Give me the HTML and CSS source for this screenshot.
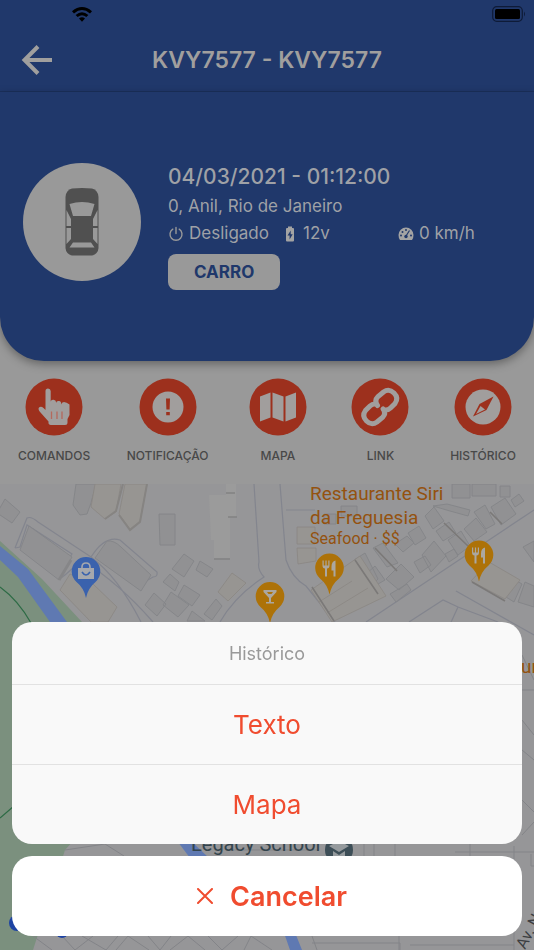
FILE: index.html
```html
<!DOCTYPE html>
<html lang="pt-BR">
<head>
    <meta charset="UTF-8">
    <meta name="viewport" content="width=device-width, initial-scale=1.0">
    <title>KVY7577</title>
    <link rel="stylesheet" href="styles.css">
</head>
<body>
    <div class="screen">
        <header class="topbar">
            <div class="status">
                <svg class="wifi" viewBox="0 0 22 16" width="22" height="16">
                    <path d="M1 5.2Q11-3.2 21 5.2L19 7.4Q11 .8 3 7.4ZM4.6 9Q11 3.6 17.4 9L15.3 11.1Q11 7.6 6.7 11.1ZM8 12.5Q11 10 14 12.5L11 15.7Z" fill="#000"/>
                </svg>
                <svg class="battery" viewBox="0 0 34 16" width="34" height="16">
                    <rect x=".7" y=".7" width="29.6" height="14.6" rx="4" fill="none" stroke="#0e1b38" stroke-width="1.2"/>
                    <rect x="3" y="3" width="25" height="10" rx="1.5" fill="#000"/>
                    <path d="M32 5.5v5q2-2.500 0-5Z" fill="#0e1b38"/>
                </svg>
            </div>
            <nav class="nav">
                <button class="back" aria-label="Voltar">
                    <svg viewBox="0 0 32 32" width="32" height="32" fill="none" stroke="#a09f9e" stroke-width="4">
                        <path d="M31 16H4M17 2.500L3.500 16 17 29.500"/>
                    </svg>
                </button>
                <h1 class="title">KVY7577 - KVY7577</h1>
            </nav>
        </header>

        <section class="vehicle">
            <div class="avatar">
                <svg viewBox="0 0 34 68" width="34" height="68">
                    <path d="M7 .5Q17-.5 27 .5Q33 2 33.500 9V60Q33 66 27 67.500H7Q1 66 .5 60V9Q1 2 7 .5Z" fill="#505050"/>
                    <path d="M4.500 16Q17 12 29.500 16L26 28H8ZM8 54.500H26L29.500 59.500H4.500ZM1.500 22L6 31V38H1.500ZM32.500 22L28 31V38H32.500ZM1.500 40H6V51L1.500 56ZM32.500 40H28V51L32.500 56Z" fill="#999"/>
                </svg>
            </div>
            <div class="info">
                <h2 class="date">04/03/2021 - 01:12:00</h2>
                <p class="address">0, Anil, Rio de Janeiro</p>
                <div class="stats">
                    <span class="stat stat-power">
                        <svg viewBox="0 0 16 16" width="16" height="16" fill="none" stroke="#999" stroke-width="1.400" stroke-linecap="round">
                            <path d="M8 1.500v6M4.800 3.200A6 6 0 1 0 11.200 3.200"/>
                        </svg>
                        Desligado
                    </span>
                    <span class="stat stat-volt">
                        <svg viewBox="0 0 10 16" width="10" height="16">
                            <path d="M3 0.500H7V2H8Q9 2 9 3V14.500Q9 15.500 8 15.500H2Q1 15.500 1 14.500V3Q1 2 2 2H3Z" fill="#a3a3a3"/>
                            <path d="M5.700 4.500L2.500 9.500H4.600V13.500L7.700 8.300H5.700Z" fill="#20386b"/>
                        </svg>
                        12v
                    </span>
                    <span class="stat">
                        <svg viewBox="0 0 16 16" width="16" height="16">
                            <path d="M8 1.500A7.500 7.500 0 0 0 .5 9Q.5 12 2 14H14Q15.500 12 15.500 9A7.500 7.500 0 0 0 8 1.500Z" fill="#a3a3a3"/>
                            <path d="M11.500 4.500L8 10" stroke="#20386b" stroke-width="1.200"/>
                            <g fill="#20386b"><circle cx="8" cy="10.500" r="1.700"/><circle cx="3" cy="9.500" r="1"/><circle cx="4.500" cy="6" r="1"/><circle cx="8" cy="4" r="1"/><circle cx="13" cy="9.500" r="1"/></g>
                        </svg>
                        0 km/h
                    </span>
                </div>
                <span class="tag">CARRO</span>
            </div>
        </section>

        <nav class="actions">
            <button class="action">
                <svg viewBox="0 0 58 58" width="58" height="58">
                    <circle cx="29" cy="29" r="28.500" fill="#9d301d"/>
                    <path d="M20.500 13Q20.500 10.500 23 10.500T25.700 13V23.500Q26 21.500 28.500 21.800T31 24V25Q31.500 22.500 34 23T36 25.500V26.500Q36.500 24 39 24T44.500 26.500V37L42.500 41V44.500Q42.500 47 40 47H26Q24.500 47 23.500 45.500V43.500L15.500 34.500Q12.500 31 14 29.500Q16 28 18.500 30L20.500 32Z" fill="#a19e9d"/>
                    <path d="M26.500 33.500V41M32 33.500V41M37 33.500V41" stroke="#b5695c" stroke-width="1.300"/>
                </svg>
                COMANDOS
            </button>
            <button class="action">
                <svg viewBox="0 0 58 58" width="58" height="58">
                    <circle cx="29" cy="29" r="28.500" fill="#9d301d"/>
                    <circle cx="29" cy="29" r="15.500" fill="#a19e9d"/>
                    <path d="M27 20.500H31L30.600 31.500H27.400ZM27.200 34H30.800V37.200H27.200Z" fill="#9d301d"/>
                </svg>
                NOTIFICAÇÃO
            </button>
            <button class="action">
                <svg viewBox="0 0 58 58" width="58" height="58">
                    <circle cx="29" cy="29" r="28.500" fill="#9d301d"/>
                    <path d="M11 18.500L21.500 14.500V39.500L11 43.500ZM23.500 14.500L34.500 18.500V43.500L23.500 39.500ZM36.500 18.500L47 14.500V39.500L36.500 43.500Z" fill="#a19e9d"/>
                </svg>
                MAPA
            </button>
            <button class="action">
                <svg viewBox="0 0 58 58" width="58" height="58">
                    <circle cx="29" cy="29" r="28.500" fill="#9d301d"/>
                    <g fill="none" stroke="#a19e9d" stroke-width="5" stroke-linecap="round">
                        <path d="M32 31Q35.500 35.500 31.500 39.500L26 44Q20.500 48 15.500 43Q10.500 38 14.500 32.500L19 28Q21.500 25.500 25 26"/>
                        <path d="M26.500 27.500Q23 22.500 27 18.500L32.500 14Q38 10 43 15Q48 20 44 25.500L39.500 30Q37 32.500 33.500 32"/>
                    </g>
                </svg>
                LINK
            </button>
            <button class="action">
                <svg viewBox="0 0 58 58" width="58" height="58">
                    <circle cx="29" cy="29" r="28.500" fill="#9d301d"/>
                    <circle cx="29" cy="29" r="17.500" fill="#a19e9d"/>
                    <path d="M39.500 18.500L32.500 32 19 38.500 25.500 26Z" fill="#9d301d"/>
                    <path d="M26.500 28L31 31.500 22 36Z" fill="#a19e9d"/>
                </svg>
                HISTÓRICO
            </button>
        </nav>

        <div class="map">
            <svg class="map-canvas" viewBox="0 484 534 466" preserveAspectRatio="xMidYMin slice">
                <rect y="484" width="534" height="466" fill="#969698"/>
                <!-- park and river -->
                <path d="M0 541L42 579 82 622 110 800 65 850 33 950H0Z" fill="#7b907e"/>
                <path d="M0 546L28 569 67 622H50L18 577 0 560Z" fill="#5f79b2"/>
                <path d="M178 842H192L209 858H190ZM283 930H294L302 950H290Z" fill="#5f79b2"/>
                <path d="M0 587Q18 600 31 623M0 818L14 806" fill="none" stroke="#2d6b45" stroke-width="1.200"/>
                <!-- roads -->
                <g fill="none" stroke="#83858e" stroke-width="1.200">
                    <path d="M15 548L27 518Q31 516 38 522L91 557Q105 535 120 540L157 572Q158 577 153 577L146 581M15 548L20 547 27 525L72 554 59 574Q58 581 65 575L82 560Q120 584 153 622M91 557Q118 577 141 622"/>
                    <path d="M254 484L259 562Q257 569 264 577Q235 596 220 622M280 484L286 560Q292 578 306 586L335 622M286 510H315M366 622L534 510M456 591L534 635M409 622L443 600 458 607 447 631M458 607L498 622"/>
                </g>
                <!-- buildings -->
                <g fill="#919193" stroke="#838488" stroke-width=".9">
                    <path d="M5 499L20 512 12 523-3 513ZM29 526L72 557 59 580 20 550ZM76 484L73 505 80 515 87 514 91 503 96 484ZM159 514H175V545H160ZM107 541Q114 540 121 547L151 575 141 591 95 558ZM184 554L194 561 184 577 172 569ZM200 561L213 569 207 577 196 570ZM170 574L179 582 175 591 163 582ZM184 585L200 595 192 606 178 596ZM171 592L189 605 178 617 163 605ZM154 593L166 604 157 616 145 605ZM216 599L222 606 212 620 204 614ZM192 611L205 621H187Z"/>
                    <path d="M425 516L434 507 444 521 433 529ZM448 540L461 531 470 546 458 555ZM464 529L476 518 487 532 474 541ZM474 512L485 505 495 524 486 529ZM491 507L505 498 516 514 501 525ZM511 500L519 494 524 501 515 507ZM500 486H510V497H500ZM422 555L434 541 446 556 431 572ZM445 554L454 549 458 556 449 562ZM414 562L425 556 431 565 420 573ZM386 579L401 564 414 577 399 590ZM365 575L375 566 385 580 373 587ZM373 548L383 543 398 563 387 567ZM354 560L365 553 378 579 367 590ZM390 594L407 584 411 590 396 602ZM452 484H470V498H452ZM472 484H496V496H472ZM395 544L407 536 414 543 403 552ZM408 533L419 526 426 538 415 545ZM341 506H357V516H341ZM324 514H336V524H324Z"/>
                    <path d="M515 580L522 584 514 602 506 597ZM525 582L534 586V607L518 602ZM523 547L534 541V562ZM436 531L449 522 456 533 443 541ZM433 506L447 504 470 510 468 516 450 511Z"/>
                </g>
                <g fill="#979592" stroke="#8a8783" stroke-width=".8">
                    <path d="M95 484L91 507 105 519 116 512 121 484ZM125 484L119 514 130 529 140 521 147 484ZM232 573L246 583 228 601 218 592ZM297 527H315V544H297ZM297 548H316V561L298 564ZM70 574L93 584 117 607 108 622H91L60 590ZM311 590L360 556 386 596 332 622ZM471 581L489 562 520 580 505 599Z"/>
                    <path d="M319 602L352 581M327 613L368 588"/>
                </g>
                <path d="M209 495H226V484H236V517H230V558H214V540H211Z" fill="#9b9b9b"/>
                <path d="M228 517H237M214 559H230M226 493H235" stroke="#838383" stroke-width="1.500"/>
                <path d="M147 484L140 522 130 530 119 515M123 484L116 511 105 519" fill="none" stroke="#868482" stroke-width="2"/>
                <path d="M59 580L71 560" stroke="#868688" stroke-width="3"/>
                <path d="M355 560L378 594M444 523L468 546M490 512L502 524M375 548L397 571M472 582L505 601M312 587L334 621" fill="none" stroke="#7b7978" stroke-width="1.600"/>
                <!-- streets between and around the sheet cards -->
                <g fill="none" stroke="#838488">
                    <path d="M522 655L534 680M522 690H534M522 720L534 735M522 750L534 760M522 800L534 812M522 835L534 822"/>
                    <path d="M65 850L105 844 124 856M230 850H318M364 842V858M374 844V858M395 842V858M455 852H534M470 842V858M514 846V950M531 854V866H534"/>
                    <path d="M33 936L52 950M62 936L75 950 93 936M82 936L106 950 118 936M116 950L128 936 149 950M148 936L160 950 171 936M170 950L188 936 205 950M208 936L222 950 238 936M244 950L251 936 272 950M312 936L317 950M312 943H400V950M399 936V950M410 945H514"/>
                </g>
                <!-- points of interest -->
                <g class="poi-name poi-food">
                    <text x="310" y="500" class="poi-large">Restaurante Siri</text>
                    <text x="310" y="524" class="poi-large">da Freguesia</text>
                    <text x="310" y="544" class="poi-small">Seafood · $$</text>
                    <text x="521" y="673" class="poi-large">ur</text>
                </g>
                <text x="191" y="851" class="poi-name poi-school">Legacy School</text>
                <text x="525" y="950" class="poi-name poi-street" transform="rotate(-62 525 950)">Av. N</text>
                <g transform="translate(86 571)">
                    <path d="M0 27Q-2 17-9.500 11A14.300 14.300 0 1 1 9.500 11Q2 17 0 27Z" fill="#3a62ad"/>
                    <path d="M-8-3H8V8H-8Z" fill="#a6a8ad"/>
                    <path d="M-4-2V-4Q-4-8 0-8T4-4V-2" fill="none" stroke="#a6a8ad" stroke-width="1.600"/>
                    <path d="M-4 1Q0 7 4 1" fill="none" stroke="#3a62ad" stroke-width="1.600"/>
                </g>
                <g transform="translate(270 596)">
                    <path d="M0 27Q-2 17-9.500 11A14.300 14.300 0 1 1 9.500 11Q2 17 0 27Z" fill="#ad7208"/>
                    <path d="M-6.500-6H6.500V-4L1 2V6H4V7.500H-4V6H-1V2L-6.500-4ZM-3-4L-1.500-2H1.500L3-4Z" fill="#aba7a0" fill-rule="evenodd"/>
                </g>
                <g id="food-pin" transform="translate(329.500 567.500)">
                    <path d="M0 27Q-2 17-9.500 11A14.300 14.300 0 1 1 9.500 11Q2 17 0 27Z" fill="#ad7208"/>
                    <path d="M-7-7V-2Q-7 1-4.500 1V9H-2.500V1Q0 1 0-2V-7H-1.200V-2H-2.900V-7H-4.100V-2H-5.800V-7ZM6-7Q2-6 2-1V3H4V9H6Z" fill="#aba7a0"/>
                </g>
                <use href="#food-pin" x="149.500" y="-13"/>
                <g transform="translate(339 850)">
                    <circle r="14" fill="#3d4e57"/>
                    <path d="M-10-4L0-9 10-4 0 2ZM-6 1L0 5 6 1V7L0 11-6 7Z" fill="#959a9d"/>
                </g>
                <circle cx="17" cy="923" r="8" fill="#1d43a3"/>
                <circle cx="62" cy="932" r="6" fill="#1d43a3"/>
                <circle cx="62" cy="932" r="3" fill="#96989e"/>
            </svg>
        </div>
    </div>

    <div class="sheet" role="dialog" aria-labelledby="sheet-title">
        <div class="sheet-group">
            <h3 class="sheet-title" id="sheet-title">Histórico</h3>
            <button class="sheet-option">Texto</button>
            <button class="sheet-option">Mapa</button>
        </div>
        <button class="sheet-cancel">
            <svg viewBox="0 0 16 16" width="16" height="16" stroke="#f04c2f" stroke-width="2" stroke-linecap="round">
                <path d="M1 1L15 15M15 1L1 15"/>
            </svg>
            Cancelar
        </button>
    </div>
</body>
</html>
```
FILE: styles.css
```css
* {
    box-sizing: border-box;
}
body {
    margin: 0;
    font-family: Inter, "Liberation Sans", sans-serif;
    background: #999;
}
h1, h2, h3, p {
    margin: 0;
}
button {
    border: none;
    background: none;
    padding: 0;
    font-family: inherit;
    cursor: pointer;
}
svg {
    display: block;
    flex: none;
}
.screen {
    display: flex;
    flex-direction: column;
    height: 100vh;
    overflow: hidden;
}

/* top bar */
.topbar {
    background: #20386b;
    border-bottom: 1px solid #1b305c;
}
.status {
    display: flex;
    justify-content: space-between;
    align-items: center;
    height: 28px;
    padding: 0 8px 0 71px;
}
.nav {
    display: grid;
    grid-template-columns: 32px 1fr 32px;
    align-items: center;
    height: 63px;
    padding: 0 21px;
}
.title {
    color: #a09f9e;
    font-size: 23px;
    font-weight: 600;
    text-align: center;
}

/* vehicle card */
.vehicle {
    display: flex;
    align-items: flex-start;
    gap: 27px;
    padding: 71px 23px;
    background: #20386b;
    border-radius: 0 0 44px 44px;
    box-shadow: 0 3px 10px rgba(0, 0, 0, 0.35);
    color: #9fa1a6;
}
.avatar {
    display: flex;
    align-items: center;
    justify-content: center;
    flex: none;
    width: 118px;
    height: 118px;
    border-radius: 50%;
    background: #999;
}
.info {
    flex: 1;
}
.date {
    font-size: 21px;
    font-weight: 500;
    line-height: 28px;
}
.address {
    margin-top: 2px;
    font-size: 17px;
    line-height: 27px;
}
.stats {
    display: flex;
    font-size: 17px;
    line-height: 27px;
}
.stat {
    display: flex;
    align-items: center;
    gap: 5px;
}
.stat-power {
    width: 117px;
}
.stat-volt {
    width: 113px;
    gap: 8px;
}
.tag {
    display: inline-block;
    margin-top: 7px;
    padding: 0 26px;
    border-radius: 8px;
    background: #999;
    color: #20386b;
    font-size: 17px;
    font-weight: 700;
    line-height: 36px;
}

/* action buttons */
.actions {
    display: flex;
    justify-content: space-between;
    padding: 17px 18px 20px;
}
.action {
    display: flex;
    flex-direction: column;
    align-items: center;
    gap: 12px;
    min-width: 66px;
    color: #484848;
    font-size: 12px;
    font-weight: 500;
    line-height: 16px;
}

/* map */
.map {
    flex: 1;
    min-height: 0;
}
.map-canvas {
    width: 100%;
    height: 100%;
}
.poi-name {
    font-family: Roboto, sans-serif;
}
.poi-food {
    fill: #94520f;
}
.poi-large {
    font-size: 19px;
}
.poi-small {
    font-size: 16px;
}
.poi-school {
    fill: #33444d;
    font-size: 20px;
}
.poi-street {
    fill: #3c3e42;
    font-size: 16px;
}

/* action sheet */
.sheet {
    position: fixed;
    right: 0;
    bottom: 0;
    left: 0;
    display: flex;
    flex-direction: column;
    gap: 12px;
    padding: 0 12px 14px;
}
.sheet-group {
    display: flex;
    flex-direction: column;
    overflow: hidden;
    border-radius: 20px;
    background: #f9f9f9;
}
.sheet-title {
    padding-top: 2px;
    color: #999;
    font-size: 18px;
    font-weight: 400;
    line-height: 60px;
    text-align: center;
}
.sheet-option {
    height: 80px;
    border-top: 1px solid #e2e2e2;
    color: #f04c2f;
    font-size: 26px;
}
.sheet-cancel {
    display: flex;
    align-items: center;
    justify-content: center;
    gap: 17px;
    height: 80px;
    padding-left: 10px;
    border-radius: 20px;
    background: #fff;
    color: #f04c2f;
    font-size: 27px;
    font-weight: 600;
}
```
